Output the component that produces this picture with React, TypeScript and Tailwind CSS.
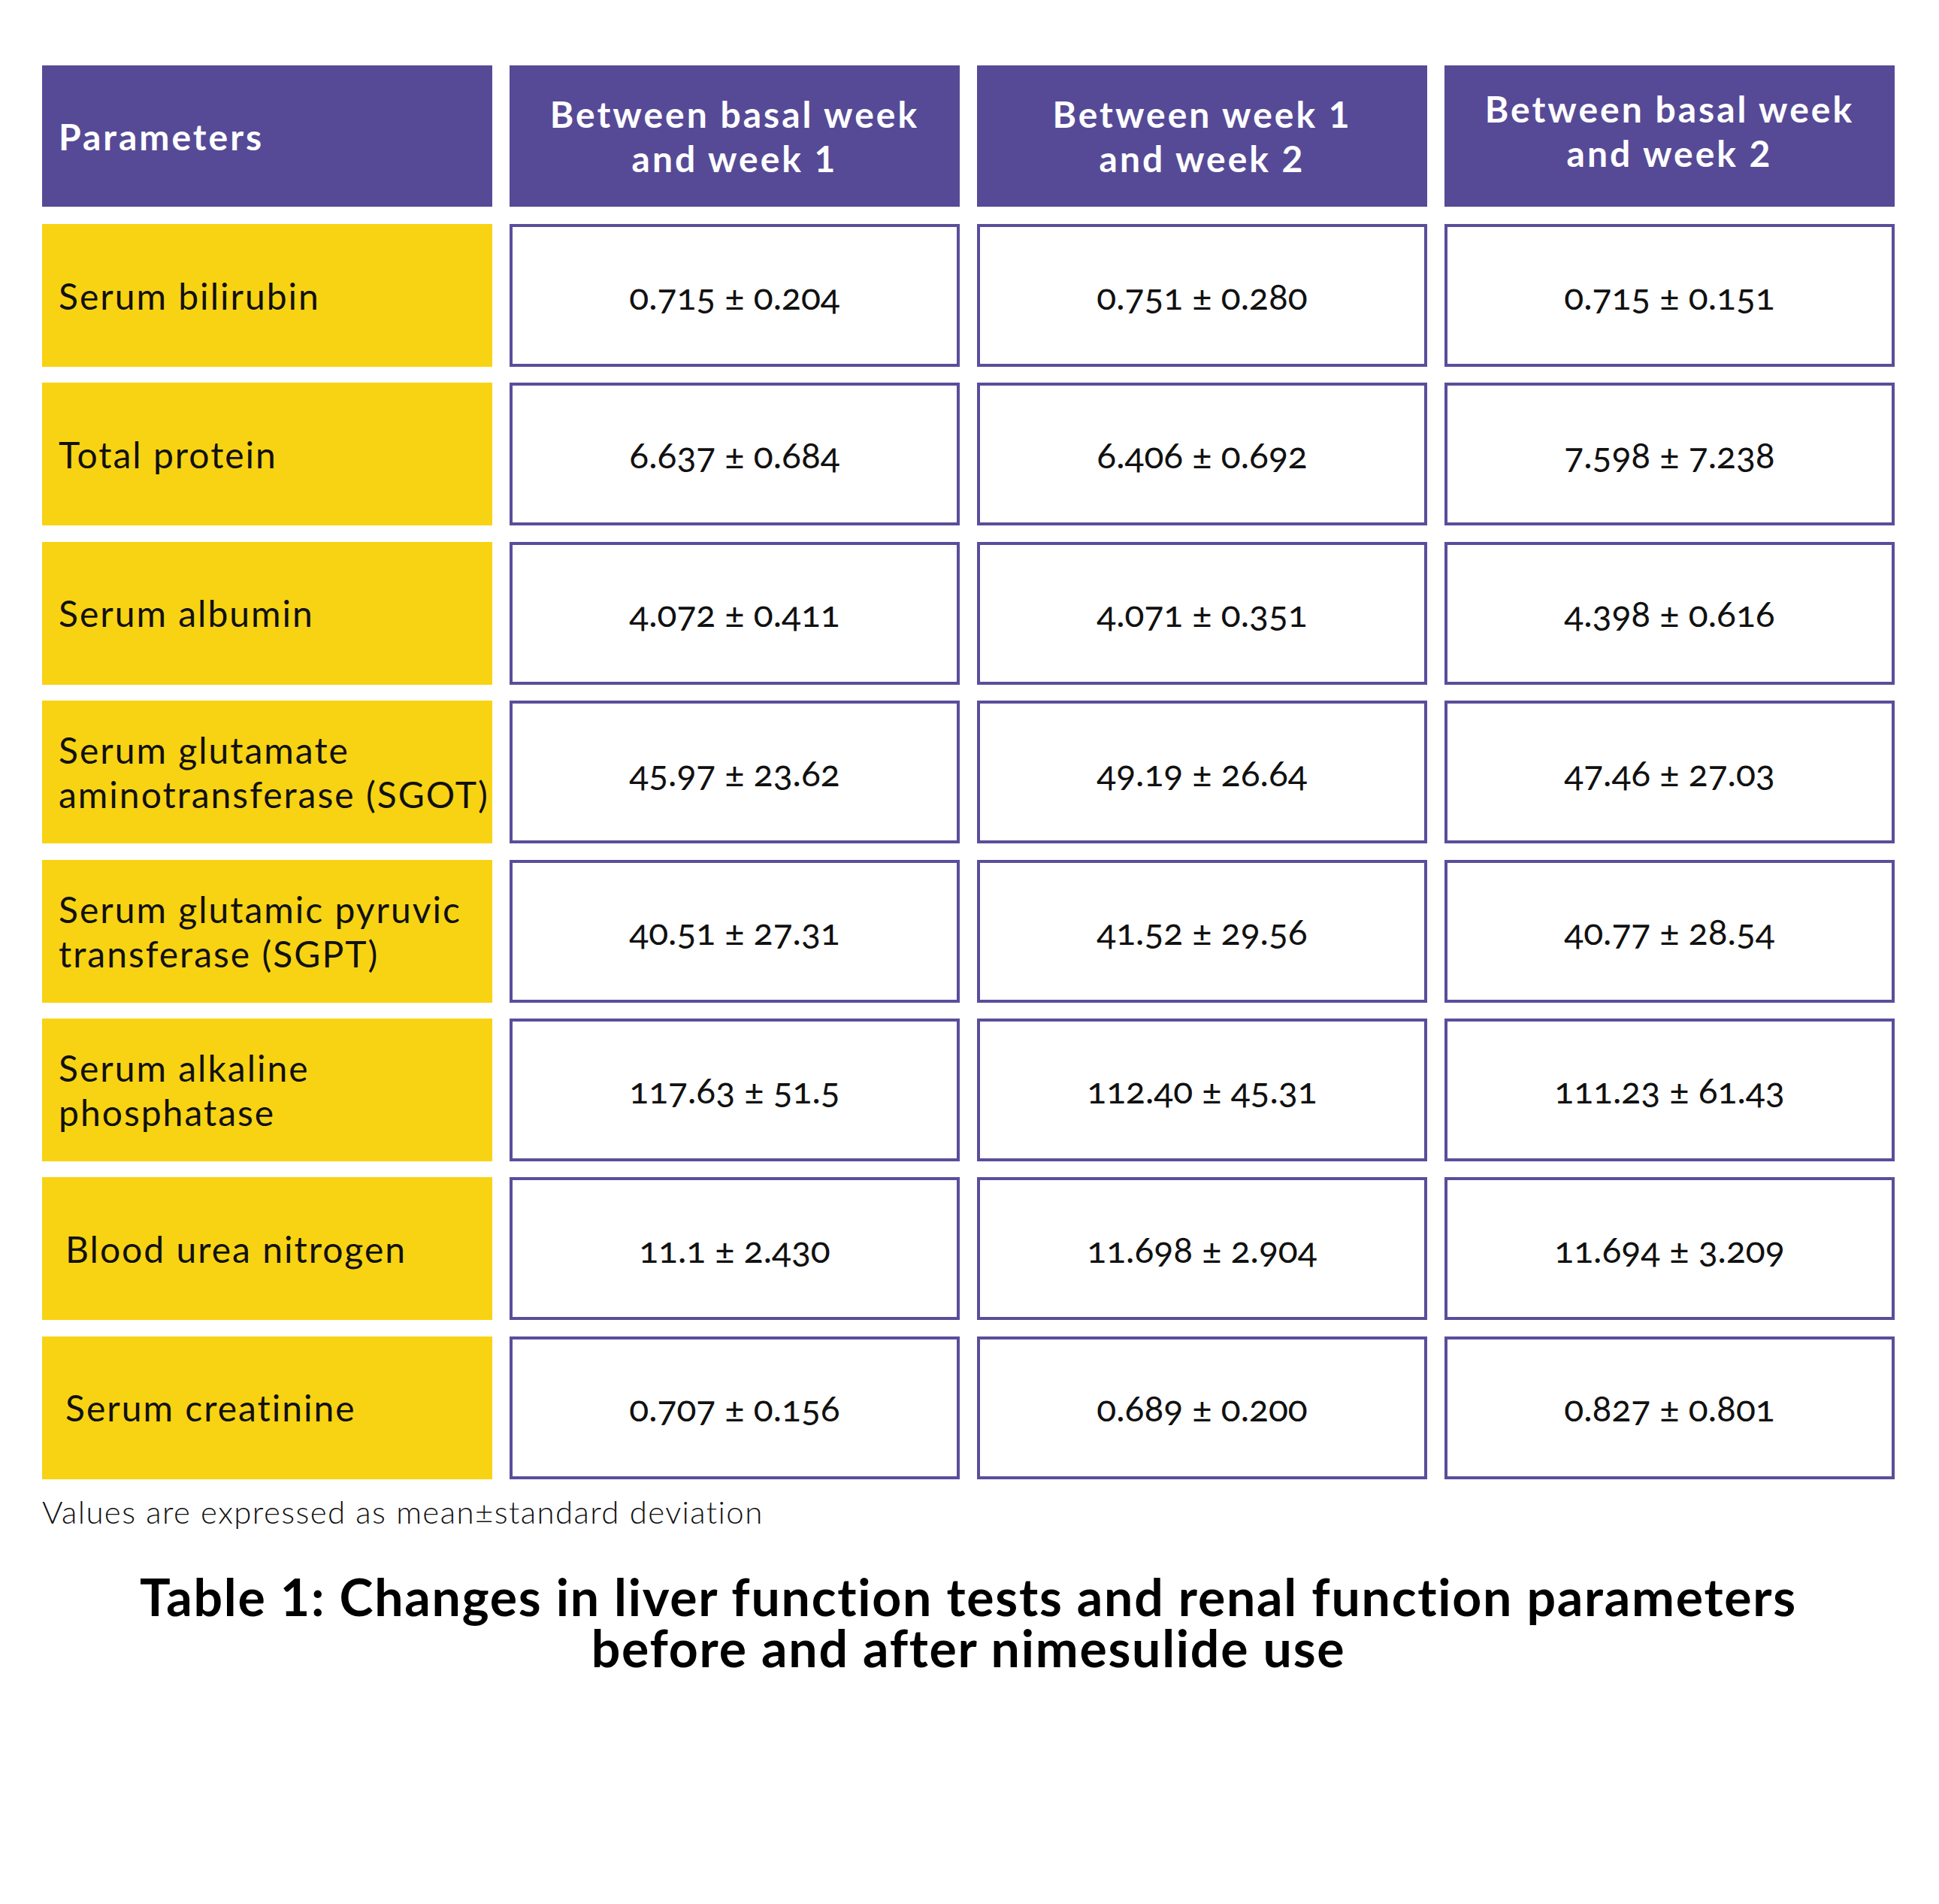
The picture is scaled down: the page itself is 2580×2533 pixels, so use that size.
import React from "react";

type Row = { label: React.ReactNode; indent?: boolean; values: [string, string, string] };

const rows: Row[] = [
  { label: "Serum bilirubin", values: ["0.715 ± 0.204", "0.751 ± 0.280", "0.715 ± 0.151"] },
  { label: "Total protein", values: ["6.637 ± 0.684", "6.406 ± 0.692", "7.598 ± 7.238"] },
  { label: "Serum albumin", values: ["4.072 ± 0.411", "4.071 ± 0.351", "4.398 ± 0.616"] },
  {
    label: (
      <>
        Serum glutamate
        <br />
        aminotransferase (SGOT)
      </>
    ),
    values: ["45.97 ± 23.62", "49.19 ± 26.64", "47.46 ± 27.03"],
  },
  {
    label: (
      <>
        Serum glutamic pyruvic
        <br />
        transferase (SGPT)
      </>
    ),
    values: ["40.51 ± 27.31", "41.52 ± 29.56", "40.77 ± 28.54"],
  },
  {
    label: (
      <>
        Serum alkaline
        <br />
        phosphatase
      </>
    ),
    values: ["117.63 ± 51.5", "112.40 ± 45.31", "111.23 ± 61.43"],
  },
  { label: "Blood urea nitrogen", indent: true, values: ["11.1 ± 2.430", "11.698 ± 2.904", "11.694 ± 3.209"] },
  { label: "Serum creatinine", indent: true, values: ["0.707 ± 0.156", "0.689 ± 0.200", "0.827 ± 0.801"] },
];

const headCls =
  "h-[188px] bg-[#564a97] flex items-center justify-center text-center text-white font-bold text-[48px] leading-[59px] tracking-[3px]";

export default function App() {
  return (
    <div
      className="w-[2580px] h-[2533px] bg-white pl-[56px] pt-[87px] text-[#111111]"
      style={{ fontFamily: "Lato, 'Open Sans', sans-serif" }}
    >
      <div className="w-[2465px]">
        {/* Header */}
        <div className="grid grid-cols-4 gap-x-[23px]">
          <div className="h-[188px] bg-[#564a97] flex items-center pl-[22px] text-white font-bold text-[48px] leading-[59px] tracking-[3px]">
            Parameters
          </div>
          <div className={headCls}>
            <span>
              Between basal week
              <br />
              and week 1
            </span>
          </div>
          <div className={headCls}>
            <span>
              Between week 1
              <br />
              and week 2
            </span>
          </div>
          <div className={headCls + " pb-[14px]"}>
            <span>
              Between basal week
              <br />
              and week 2
            </span>
          </div>
        </div>

        {/* Body */}
        <div className="mt-[23px] grid grid-cols-4 gap-x-[23px] gap-y-[21.4px]">
          {rows.map((r, i) => (
            <React.Fragment key={i}>
              <div
                className={
                  r.indent
                    ? "h-[190px] bg-[#f8d313] flex items-center pl-[31px] text-[48px] leading-[59px] tracking-[2px]"
                    : "h-[190px] bg-[#f8d313] flex items-center pl-[22px] text-[48px] leading-[59px] tracking-[2px]"
                }
              >
                <span>{r.label}</span>
              </div>
              {r.values.map((v, j) => (
                <div
                  key={j}
                  className="h-[190px] bg-white border-[4px] border-[#5a4e9b] flex items-center justify-center text-[48px] leading-[59px] oldstyle-nums"
                >
                  {v}
                </div>
              ))}
            </React.Fragment>
          ))}
        </div>

        <div className="mt-[18px] text-[42px] leading-[50px] font-light tracking-[1.4px]">
          Values are expressed as mean±standard deviation
        </div>

        <div className="mt-[54px] text-center font-bold text-[68px] leading-[68px] tracking-[1.75px] text-black">
          Table 1: Changes in liver function tests and renal function parameters
          <br />
          before and after nimesulide use
        </div>
      </div>
    </div>
  );
}
